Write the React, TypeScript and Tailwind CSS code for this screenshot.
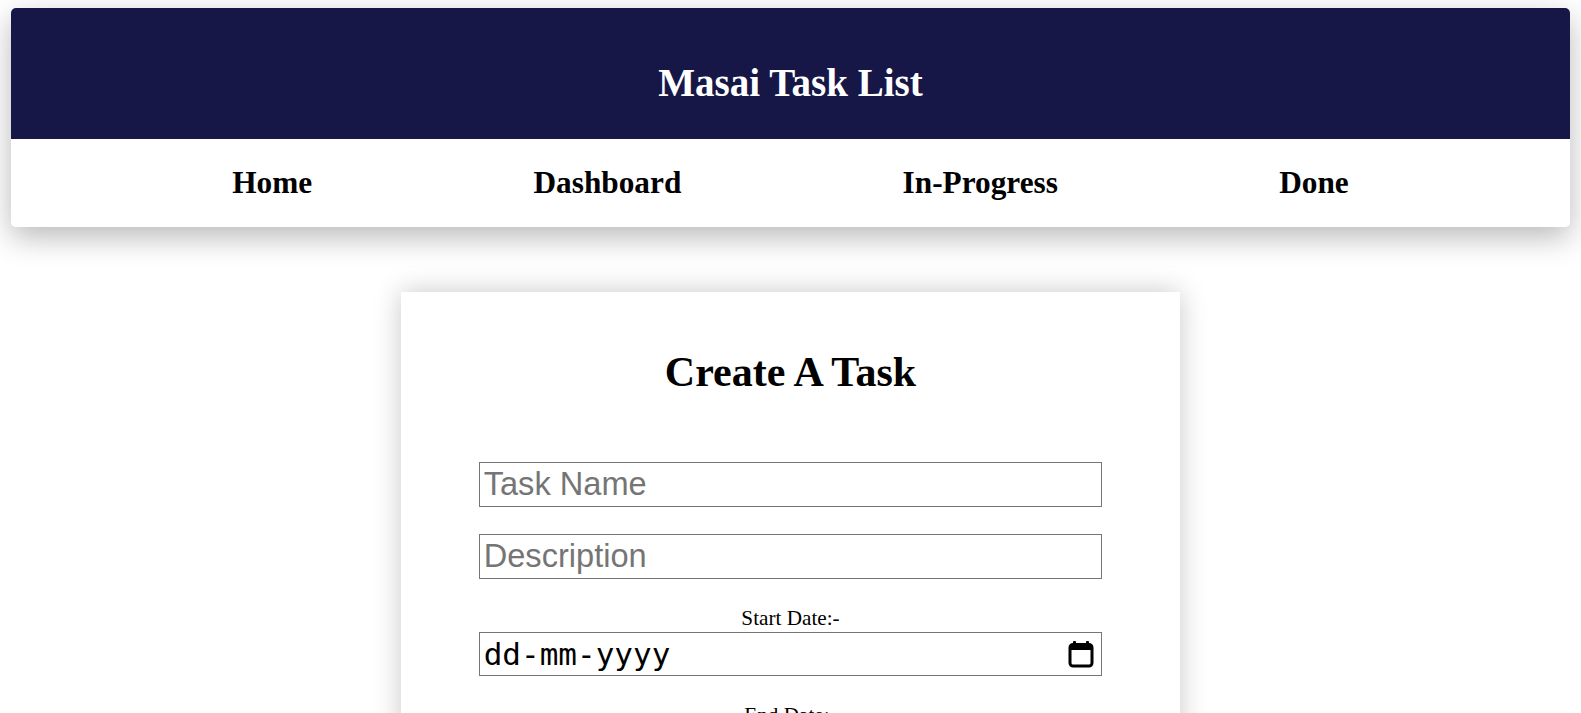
import { useState } from 'react';

const links = ['Home', 'Dashboard', 'In-Progress', 'Done'];

function CalendarIcon() {
  return (
    <svg width="26" height="28" viewBox="0 0 26 28" fill="none">
      <rect x="5" y="1" width="3" height="5" rx="1" fill="#000" />
      <rect x="18" y="1" width="3" height="5" rx="1" fill="#000" />
      <rect x="2" y="4.5" width="22" height="21.5" rx="3" stroke="#000" strokeWidth="3" />
      <rect x="2" y="4.5" width="22" height="5.5" fill="#000" />
    </svg>
  );
}

function DateField({ label }: { label: string }) {
  return (
    <div className="flex flex-col items-center">
      <label className="text-[21.2px] leading-[24px] text-black font-['Liberation_Serif',serif]">
        {label}
      </label>
      <div className="mt-[2px] flex h-[44px] w-4/5 items-center justify-between border border-[#767676] pl-[4px] pr-[7px]">
        <span className="text-[31px] leading-none text-black font-['DejaVu_Sans_Mono',monospace]">
          dd-mm-yyyy
        </span>
        <CalendarIcon />
      </div>
    </div>
  );
}

export default function App() {
  const [name, setName] = useState('');
  const [desc, setDesc] = useState('');

  return (
    <div className="h-[713px] overflow-hidden bg-white px-[11px] pt-2 font-['Liberation_Serif',serif]">
      <header className="rounded-[5px] shadow-[0_10px_30px_rgba(0,0,0,0.28)]">
        <div className="rounded-t-[5px] bg-[#161747] pb-[34px] pt-[53px] text-center">
          <h1 className="text-[39px] font-bold leading-[44px] text-white">Masai Task List</h1>
        </div>
        <nav className="flex h-[88px] items-center justify-evenly rounded-[5px] bg-white">
          {links.map((link) => (
            <a key={link} href="#" className="text-[31.3px] font-bold leading-[36px] text-black">
              {link}
            </a>
          ))}
        </nav>
      </header>

      <section className="mx-auto mt-[65px] w-1/2 bg-white pb-10 pt-[57px] shadow-[0_0_26px_rgba(0,0,0,0.22)]">
        <h2 className="text-center text-[42px] font-bold leading-[46px] text-black">Create A Task</h2>

        <form className="mt-[67px] flex flex-col gap-[27px]">
          <input
            value={name}
            onChange={(e) => setName(e.target.value)}
            placeholder="Task Name"
            className="mx-auto h-[45px] w-4/5 border border-[#767676] px-[4px] text-[32.6px] text-black placeholder:text-[#757575] font-['Liberation_Sans',Arial,sans-serif] outline-none"
          />
          <input
            value={desc}
            onChange={(e) => setDesc(e.target.value)}
            placeholder="Description"
            className="mx-auto h-[45px] w-4/5 border border-[#767676] px-[4px] text-[32.6px] text-black placeholder:text-[#757575] font-['Liberation_Sans',Arial,sans-serif] outline-none"
          />
          <DateField label="Start Date:-" />
          <DateField label="End Date:-" />
          <button
            type="button"
            className="mx-auto h-[45px] w-4/5 border border-[#767676] bg-[#efefef] text-[24px] font-['Liberation_Sans',Arial,sans-serif]"
          >
            Create Task
          </button>
        </form>
      </section>
    </div>
  );
}
